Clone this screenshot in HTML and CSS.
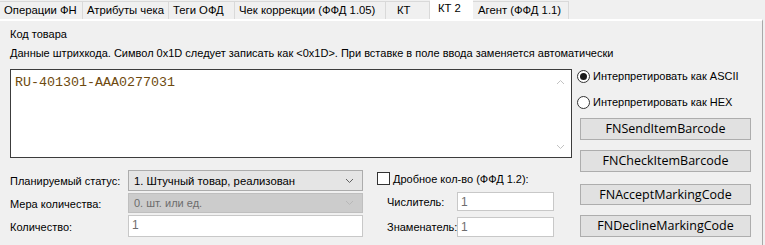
FILE: index.html
```html
<!DOCTYPE html>
<html lang="ru">
<head>
<meta charset="utf-8">
<link rel="stylesheet" href="styles.css">
</head>
<body>
<div class="tabs">
  <div class="tab t1">Операции ФН</div>
  <div class="tab t2">Атрибуты чека</div>
  <div class="tab t3">Теги ОФД</div>
  <div class="tab t4">Чек коррекции (ФФД 1.05)</div>
  <div class="tab t5">КТ</div>
  <div class="tab active t6">КТ 2</div>
  <div class="tab t7">Агент (ФФД 1.1)</div>
</div>
<div class="panel">
  <div class="lbl title">Код товара</div>
  <div class="lbl desc">Данные штрихкода. Символ 0x1D следует записать как &lt;0x1D&gt;. При вставке в поле ввода заменяется автоматически</div>
  <div class="main">
    <div class="left">
      <div class="textarea">
        <span class="code">RU-401301-AAA0277031</span>
        <div class="scroll">
          <svg width="9" height="6" viewBox="0 0 9 6"><path d="M1 5 L4.5 1.5 L8 5" fill="none" stroke="#c2c2c2" stroke-width="1"/></svg>
          <svg width="9" height="6" viewBox="0 0 9 6"><path d="M1 1 L4.5 4.5 L8 1" fill="none" stroke="#c2c2c2" stroke-width="1"/></svg>
        </div>
      </div>
      <div class="form">
        <div class="fields">
          <div class="lbl flabel">Планируемый статус:</div>
          <div class="combo">
            <span>1. Штучный товар, реализован</span>
            <svg width="9" height="6" viewBox="0 0 9 6"><path d="M1 1 L4.5 4.5 L8 1" fill="none" stroke="#606060" stroke-width="1"/></svg>
          </div>
          <div class="lbl flabel">Мера количества:</div>
          <div class="combo disabled">
            <span>0. шт. или ед.</span>
            <svg width="9" height="6" viewBox="0 0 9 6"><path d="M1 1 L4.5 4.5 L8 1" fill="none" stroke="#b8b8b8" stroke-width="1"/></svg>
          </div>
          <div class="lbl flabel">Количество:</div>
          <div class="input qty">1</div>
        </div>
        <div class="frac">
          <div class="check-row">
            <span class="checkbox"></span>
            <span class="lbl">Дробное кол-во (ФФД 1.2):</span>
          </div>
          <div class="frac-row num">
            <span class="lbl">Числитель:</span>
            <div class="input small">1</div>
          </div>
          <div class="frac-row den">
            <span class="lbl">Знаменатель:</span>
            <div class="input small">1</div>
          </div>
        </div>
      </div>
    </div>
    <div class="right">
      <div class="radio-row first"><span class="radio checked"></span><span class="lbl">Интерпретировать как ASCII</span></div>
      <div class="radio-row"><span class="radio"></span><span class="lbl">Интерпретировать как HEX</span></div>
      <div class="btn b1">FNSendItemBarcode</div>
      <div class="btn b2">FNCheckItemBarcode</div>
      <div class="btn b3">FNAcceptMarkingCode</div>
      <div class="btn b4">FNDeclineMarkingCode</div>
    </div>
  </div>
</div>
</body>
</html>
```
FILE: styles.css
```css
* { box-sizing: border-box; }
html, body {
  margin: 0;
  padding: 0;
  background: #f0f0f0;
  width: 765px;
  height: 245px;
  overflow: hidden;
}
body {
  font-family: "Liberation Sans", Arial, sans-serif;
  font-size: 11px;
  color: #000;
}
.tabs {
  display: flex;
  height: 19px;
  align-items: flex-end;
}
.tab {
  height: 18px;
  padding: 0 0 0 4px;
  border-right: 1px solid #d9d9d9;
  border-top: 1px solid #d9d9d9;
  background: #f0f0f0;
  font-size: 11.3px;
  line-height: 17px;
  white-space: nowrap;
  overflow: hidden;
  color: #000;
}
.t1 { width: 83px; }
.t2 { width: 86px; }
.t3 { width: 66px; }
.t4 { width: 151px; }
.t5 { width: 44px; padding-left: 11px; }
.t6 { width: 43px; }
.t7 { width: 96px; padding-left: 5px; }
.tab.active {
  height: 19px;
  background: #fff;
  border: none;
  padding-left: 8px;
  line-height: 16px;
}
.panel {
  width: 763px;
  height: 226px;
  border-top: 2px solid #fff;
  border-right: 1px solid #a9a9a9;
  background: #f0f0f0;
  padding: 0 0 0 10px;
}
.lbl { white-space: nowrap; }
.title { margin-top: 7px; line-height: 13px; height: 13px; }
.desc { margin-top: 6px; line-height: 13px; height: 13px; }
.main {
  display: flex;
  margin-top: 9px;
}
.left { width: 562px; }
.textarea {
  width: 562px;
  height: 89px;
  background: #fff;
  border: 1px solid #3c3c3c;
  position: relative;
  padding: 5px 0 0 4px;
}
.code {
  font-family: "Liberation Mono", "Courier New", monospace;
  font-size: 13.33px;
  line-height: 15px;
  color: #6e4a0e;
}
.scroll {
  position: absolute;
  right: 6px;
  top: 9px;
  bottom: 7px;
  display: flex;
  flex-direction: column;
  justify-content: space-between;
}
.scroll svg { display: block; }
.form {
  display: flex;
  margin-top: 12px;
}
.fields {
  display: grid;
  grid-template-columns: 118px 235px;
  grid-template-rows: 21px 20px 22px;
  row-gap: 2px;
  align-items: center;
}
.flabel { padding-top: 1px; }
.combo {
  height: 100%;
  border: 1px solid #acacac;
  background: #e5e5e5;
  display: flex;
  align-items: center;
  justify-content: space-between;
  padding: 0 8px 0 5px;
  font-size: 11.3px;
}
.combo.disabled {
  background: #cccccc;
  border-color: #bfbfbf;
  color: #6d6d6d;
  font-size: 11px;
}
.input {
  height: 100%;
  background: #fff;
  border: 1px solid #c8c8c8;
  color: #6d6d6d;
  font-size: 12px;
  padding: 1px 0 0 3px;
  line-height: 16px;
}
.frac {
  margin-left: 14px;
  display: flex;
  flex-direction: column;
}
.check-row {
  display: flex;
  align-items: center;
  margin-top: 2px;
  gap: 3px;
}
.checkbox {
  width: 13px;
  height: 13px;
  border: 1px solid #333;
  background: #fff;
}
.frac-row {
  display: flex;
  align-items: center;
  padding-left: 10px;
}
.frac-row .lbl { width: 70px; }
.frac-row.num { margin-top: 7px; }
.frac-row.den { margin-top: 6px; }
.input.small { width: 97px; height: 19px; }
.frac-row.den .input.small { height: 20px; }
.right {
  margin-left: 5px;
  display: flex;
  flex-direction: column;
}
.radio-row {
  display: flex;
  align-items: center;
  gap: 3px;
  height: 14px;
}
.radio-row + .radio-row { margin-top: 12px; }
.radio {
  width: 13px;
  height: 13px;
  border: 1px solid #333;
  border-radius: 50%;
  background: #fff;
  position: relative;
}
.radio.checked::after {
  content: "";
  position: absolute;
  left: 2px;
  top: 2px;
  width: 7px;
  height: 7px;
  border-radius: 50%;
  background: #1a1a1a;
}
.btn {
  width: 171px;
  height: 22px;
  margin-left: 3px;
  background: #e1e1e1;
  border: 1px solid #adadad;
  font-family: "Open Sans", "Noto Sans", sans-serif;
  font-size: 12.5px;
  line-height: 20px;
  text-align: center;
  white-space: nowrap;
}
.b1 { margin-top: 9px; }
.b2 { margin-top: 10px; }
.b3 { margin-top: 12px; height: 21px; }
.b4 { margin-top: 10px; }
```
